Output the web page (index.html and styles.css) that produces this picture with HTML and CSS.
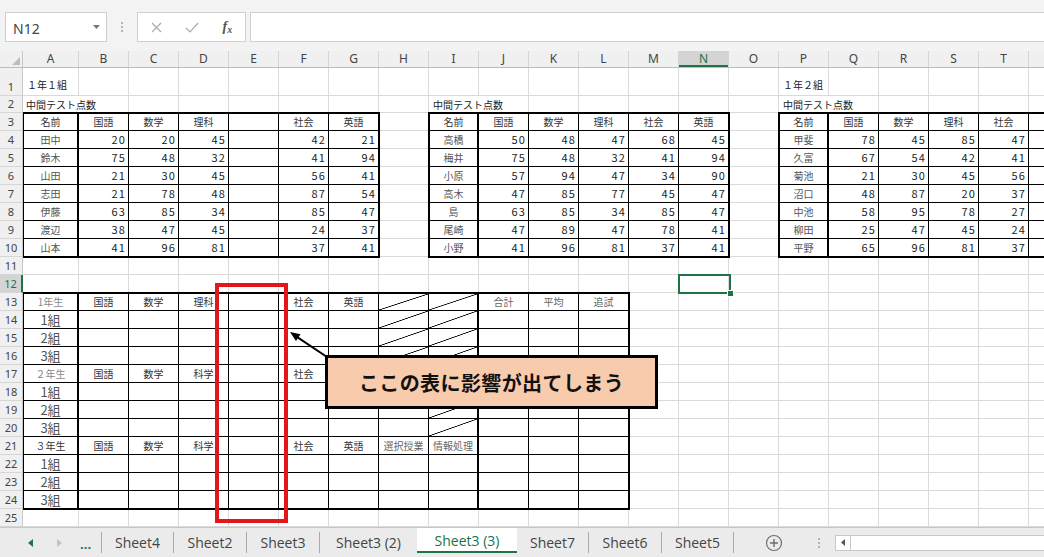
FILE: index.html
```html
<!DOCTYPE html>
<html lang="ja">
<head>
<meta charset="utf-8">
<title>Excel</title>
<link rel="stylesheet" href="styles.css">
</head>
<body>
<div class="app">
  <header class="fbar">
    <div class="namebox">
      <span class="nbtext">N12</span>
      <svg class="dd" width="7" height="4" viewBox="0 0 7 4"><path d="M0 0H7L3.5 4Z" fill="#777"/></svg>
    </div>
    <div class="vdots"><i></i><i></i><i></i></div>
    <div class="fbtns">
      <span class="fslot"><svg width="11" height="11" viewBox="0 0 11 11"><path d="M1 1L10 10M10 1L1 10" stroke="#ababab" stroke-width="1.2" fill="none"/></svg></span>
      <span class="fslot"><svg width="14" height="11" viewBox="0 0 14 11"><path d="M1 6L5 10L13 1" stroke="#ababab" stroke-width="1.2" fill="none"/></svg></span>
      <span class="fslot fx">f<small>x</small></span>
    </div>
    <div class="finput"></div>
  </header>

  <div class="colheads">
    <div class="corner"><svg width="8" height="8" viewBox="0 0 8 8"><path d="M8 0V8H0Z" fill="#bdbdbd"/></svg></div>
    <div class="ch ca">A</div><div class="ch">B</div><div class="ch">C</div><div class="ch">D</div><div class="ch">E</div><div class="ch">F</div><div class="ch">G</div><div class="ch">H</div><div class="ch">I</div><div class="ch">J</div><div class="ch">K</div><div class="ch">L</div><div class="ch">M</div><div class="ch on">N</div><div class="ch">O</div><div class="ch">P</div><div class="ch">Q</div><div class="ch">R</div><div class="ch">S</div><div class="ch">T</div><div class="ch"></div>
  </div>

  <div class="main">
    <div class="rowheads">
      <div class="rh h1">1</div><div class="rh h2">2</div><div class="rh">3</div><div class="rh">4</div><div class="rh">5</div><div class="rh">6</div><div class="rh">7</div><div class="rh">8</div><div class="rh">9</div><div class="rh">10</div><div class="rh">11</div><div class="rh on">12</div><div class="rh">13</div><div class="rh">14</div><div class="rh">15</div><div class="rh">16</div><div class="rh">17</div><div class="rh">18</div><div class="rh">19</div><div class="rh">20</div><div class="rh">21</div><div class="rh">22</div><div class="rh">23</div><div class="rh">24</div><div class="rh">25</div>
    </div>

    <div class="cells">
      <div class="lbl l-a1">１年１組</div>
      <div class="lbl l-a2">中間テスト点数</div>
      <div class="lbl l-i2">中間テスト点数</div>
      <div class="lbl l-p1">１年２組</div>
      <div class="lbl l-p2">中間テスト点数</div>

      <div class="tb t1">
        <span class="a">名前</span><span>国語</span><span>数学</span><span>理科</span><span></span><span>社会</span><span>英語</span>
        <span class="a nm">田中</span><span class="r">20</span><span class="r">20</span><span class="r">45</span><span></span><span class="r">42</span><span class="r">21</span>
        <span class="a nm">鈴木</span><span class="r">75</span><span class="r">48</span><span class="r">32</span><span></span><span class="r">41</span><span class="r">94</span>
        <span class="a nm">山田</span><span class="r">21</span><span class="r">30</span><span class="r">45</span><span></span><span class="r">56</span><span class="r">41</span>
        <span class="a nm">志田</span><span class="r">21</span><span class="r">78</span><span class="r">48</span><span></span><span class="r">87</span><span class="r">54</span>
        <span class="a nm">伊藤</span><span class="r">63</span><span class="r">85</span><span class="r">34</span><span></span><span class="r">85</span><span class="r">47</span>
        <span class="a nm">渡辺</span><span class="r">38</span><span class="r">47</span><span class="r">45</span><span></span><span class="r">24</span><span class="r">37</span>
        <span class="a nm">山本</span><span class="r">41</span><span class="r">96</span><span class="r">81</span><span></span><span class="r">37</span><span class="r">41</span>
      </div>

      <div class="tb t2">
        <span class="a">名前</span><span>国語</span><span>数学</span><span>理科</span><span>社会</span><span>英語</span>
        <span class="a nm">高橋</span><span class="r">50</span><span class="r">48</span><span class="r">47</span><span class="r">68</span><span class="r">45</span>
        <span class="a nm">梅井</span><span class="r">75</span><span class="r">48</span><span class="r">32</span><span class="r">41</span><span class="r">94</span>
        <span class="a nm">小原</span><span class="r">57</span><span class="r">94</span><span class="r">47</span><span class="r">34</span><span class="r">90</span>
        <span class="a nm">高木</span><span class="r">47</span><span class="r">85</span><span class="r">77</span><span class="r">45</span><span class="r">47</span>
        <span class="a nm">島</span><span class="r">63</span><span class="r">85</span><span class="r">34</span><span class="r">85</span><span class="r">47</span>
        <span class="a nm">尾崎</span><span class="r">47</span><span class="r">89</span><span class="r">47</span><span class="r">78</span><span class="r">41</span>
        <span class="a nm">小野</span><span class="r">41</span><span class="r">96</span><span class="r">81</span><span class="r">37</span><span class="r">41</span>
      </div>

      <div class="tb t3">
        <span class="a">名前</span><span>国語</span><span>数学</span><span>理科</span><span>社会</span><span></span>
        <span class="a nm">甲斐</span><span class="r">78</span><span class="r">45</span><span class="r">85</span><span class="r">47</span><span class="r"></span>
        <span class="a nm">久富</span><span class="r">67</span><span class="r">54</span><span class="r">42</span><span class="r">41</span><span class="r"></span>
        <span class="a nm">菊池</span><span class="r">21</span><span class="r">30</span><span class="r">45</span><span class="r">56</span><span class="r"></span>
        <span class="a nm">沼口</span><span class="r">48</span><span class="r">87</span><span class="r">20</span><span class="r">37</span><span class="r"></span>
        <span class="a nm">中池</span><span class="r">58</span><span class="r">95</span><span class="r">78</span><span class="r">27</span><span class="r"></span>
        <span class="a nm">柳田</span><span class="r">25</span><span class="r">47</span><span class="r">45</span><span class="r">24</span><span class="r"></span>
        <span class="a nm">平野</span><span class="r">65</span><span class="r">96</span><span class="r">81</span><span class="r">37</span><span class="r"></span>
      </div>

      <div class="tb t4">
        <span class="a yr">1年生</span><span>国語</span><span>数学</span><span>理科</span><span></span><span>社会</span><span>英語</span><span class="d"></span><span class="a d"></span><span class="lt">合計</span><span class="lt">平均</span><span class="lt">追試</span>
        <span class="a g">1組</span><span></span><span></span><span></span><span></span><span></span><span></span><span class="d"></span><span class="a d"></span><span></span><span></span><span></span>
        <span class="a g">2組</span><span></span><span></span><span></span><span></span><span></span><span></span><span class="d"></span><span class="a d"></span><span></span><span></span><span></span>
        <span class="a g">3組</span><span></span><span></span><span></span><span></span><span></span><span></span><span class="d"></span><span class="a d"></span><span></span><span></span><span></span>
        <span class="a yr">２年生</span><span>国語</span><span>数学</span><span>科学</span><span></span><span>社会</span><span></span><span></span><span class="a d"></span><span></span><span></span><span></span>
        <span class="a g">1組</span><span></span><span></span><span></span><span></span><span></span><span></span><span></span><span class="a d"></span><span></span><span></span><span></span>
        <span class="a g">2組</span><span></span><span></span><span></span><span></span><span></span><span></span><span></span><span class="a d"></span><span></span><span></span><span></span>
        <span class="a g">3組</span><span></span><span></span><span></span><span></span><span></span><span></span><span></span><span class="a d"></span><span></span><span></span><span></span>
        <span class="a yr3">３年生</span><span>国語</span><span>数学</span><span>科学</span><span></span><span>社会</span><span>英語</span><span class="lt">選択授業</span><span class="a lt">情報処理</span><span></span><span></span><span></span>
        <span class="a g">1組</span><span></span><span></span><span></span><span></span><span></span><span></span><span></span><span class="a"></span><span></span><span></span><span></span>
        <span class="a g">2組</span><span></span><span></span><span></span><span></span><span></span><span></span><span></span><span class="a"></span><span></span><span></span><span></span>
        <span class="a g">3組</span><span></span><span></span><span></span><span></span><span></span><span></span><span></span><span class="a"></span><span></span><span></span><span></span>
      </div>

      <div class="sel"></div>

      <div class="hilite"></div>
      <svg class="arrow" width="50" height="35" viewBox="0 0 50 35">
        <path d="M42 30L13 10.6" stroke="#000" stroke-width="2" fill="none"/>
        <path d="M5 5L15.5 7.3L11 13.9Z" fill="#000"/>
      </svg>
      <div class="callout">ここの表に影響が出てしまう</div>
    </div>
  </div>

  <footer class="tabbar">
    <div class="tnav">
      <svg class="tl" width="5" height="8" viewBox="0 0 5 8"><path d="M5 0V8L0 4Z" fill="#217346"/></svg>
      <svg class="tr" width="5" height="8" viewBox="0 0 5 8"><path d="M0 0V8L5 4Z" fill="#c4c4c4"/></svg>
      <span class="tdots">...</span>
    </div>
    <span class="sep"></span>
    <span class="tab w71">Sheet4</span><span class="sep"></span>
    <span class="tab w72">Sheet2</span><span class="sep"></span>
    <span class="tab w72">Sheet3</span><span class="sep"></span>
    <span class="tab w97">Sheet3 (2)</span>
    <span class="tab active">Sheet3 (3)</span>
    <span class="tab w71">Sheet7</span><span class="sep"></span>
    <span class="tab w72">Sheet6</span><span class="sep"></span>
    <span class="tab w71">Sheet5</span><span class="sep"></span>
    <span class="addbtn"><svg width="18" height="18" viewBox="0 0 18 18"><circle cx="9" cy="9" r="7.5" stroke="#6f6f6f" stroke-width="1.2" fill="none"/><path d="M9 5V13M5 9H13" stroke="#6f6f6f" stroke-width="1.4"/></svg></span>
    <span class="hdots"><i></i><i></i><i></i></span>
    <div class="hscroll"><span class="sb"><svg width="4" height="7" viewBox="0 0 4 7"><path d="M4 0V7L0 3.5Z" fill="#555"/></svg></span></div>
  </footer>
</div>
</body>
</html>
```

FILE: styles.css
```css
html, body {
  margin: 0;
  padding: 0;
}
body {
  width: 1044px;
  height: 557px;
  overflow: hidden;
  background: #fff;
  font-family: "Noto Sans", "Noto Sans CJK JP", sans-serif;
}
.app {
  width: 1044px;
  height: 557px;
  display: flex;
  flex-direction: column;
  overflow: hidden;
}

/* formula bar */
.fbar {
  flex: none;
  height: 51px;
  box-sizing: border-box;
  padding: 12px 0 0 5px;
  display: flex;
  align-items: flex-start;
  background: #f3f3f3;
}
.namebox {
  flex: none;
  width: 102px;
  height: 30px;
  box-sizing: border-box;
  border: 1px solid #cfcfcf;
  background: #fff;
  display: flex;
  align-items: center;
  justify-content: space-between;
  padding: 0 6px 0 7px;
}
.nbtext {
  font-size: 14px;
  color: #444;
  padding-top: 3px;
}
.vdots {
  flex: none;
  width: 30px;
  height: 30px;
  display: flex;
  flex-direction: column;
  align-items: center;
  justify-content: center;
  gap: 2px;
}
.vdots i, .hdots i {
  display: block;
  width: 2px;
  height: 2px;
  background: #b4b4b4;
}
.fbtns {
  flex: none;
  width: 109px;
  height: 30px;
  box-sizing: border-box;
  border: 1px solid #cfcfcf;
  background: #fff;
  display: flex;
  align-items: center;
  padding-left: 1px;
}
.fslot {
  width: 36px;
  display: flex;
  justify-content: center;
  align-items: center;
}
.fx {
  font-family: "Liberation Serif", serif;
  font-style: italic;
  font-weight: 700;
  font-size: 14px;
  color: #555;
}
.fx small {
  font-size: 10px;
  position: relative;
  top: 2px;
}
.finput {
  flex: 1;
  height: 30px;
  margin-left: 4px;
  box-sizing: border-box;
  border: 1px solid #cfcfcf;
  border-right: none;
  background: #fff;
}

/* column headers */
.colheads {
  flex: none;
  height: 17px;
  box-sizing: border-box;
  display: flex;
  background: #f0f0f0;
  border-bottom: 1px solid #bcbcbc;
  overflow: hidden;
}
.corner {
  flex: none;
  width: 23px;
  box-sizing: border-box;
  border-right: 1px solid #c8c8c8;
  display: flex;
  align-items: flex-end;
  justify-content: flex-end;
  padding: 0 2px 2px 0;
}
.ch {
  flex: none;
  width: 50px;
  box-sizing: border-box;
  border-right: 1px solid #d6d6d6;
  text-align: center;
  font-size: 12px;
  line-height: 16px;
  color: #444;
}
.ch.ca {
  width: 56px;
}
.ch.on {
  background: #d4d4d4;
  color: #217346;
  box-shadow: inset 0 -2px 0 #217346;
}

/* body */
.main {
  flex: none;
  height: 459px;
  display: flex;
}
.rowheads {
  flex: none;
  width: 23px;
  display: flex;
  flex-direction: column;
  background: #f0f0f0;
}
.rh {
  flex: none;
  height: 18px;
  box-sizing: border-box;
  border-bottom: 1px solid #d6d6d6;
  border-right: 1px solid #c8c8c8;
  font-size: 11px;
  line-height: 17px;
  text-align: center;
  color: #444;
}
.rh.h1 {
  height: 28px;
  padding-top: 10px;
}
.rh.h2 {
  height: 17px;
  line-height: 16px;
}
.rh.on {
  background: #d4d4d4;
  color: #217346;
  border-right: 2px solid #217346;
}

.cells {
  position: relative;
  flex: none;
  width: 1021px;
  height: 459px;
  overflow: hidden;
  display: grid;
  grid-template-columns: 56px repeat(20, 50px);
  grid-template-rows: 28px 17px repeat(23, 18px);
  background-color: #fff;
  background-image:
    repeating-linear-gradient(to right, transparent 0 49px, #dadada 49px 50px),
    repeating-linear-gradient(to bottom, transparent 0 17px, #dadada 17px 18px),
    linear-gradient(#dadada, #dadada),
    linear-gradient(#dadada, #dadada);
  background-position: 6px 0, 0 45px, 0 27px, 0 44px;
  background-size: calc(100% - 6px) 100%, 100% calc(100% - 45px), 100% 1px, 100% 1px;
  background-repeat: no-repeat;
}

.lbl {
  font-family: "Noto Sans CJK JP", sans-serif;
  font-size: 10px;
  color: #222;
  background: #fff;
  margin: 0 1px 1px 0;
  padding-left: 4px;
  display: flex;
  align-items: center;
  white-space: nowrap;
}
.l-a1 { grid-column: 1 / 2; grid-row: 1 / 2; align-items: flex-end; padding-bottom: 3px; }
.l-a2 { grid-column: 1 / 3; grid-row: 2 / 3; padding-left: 3px; }
.l-i2 { grid-column: 9 / 11; grid-row: 2 / 3; }
.l-p1 { grid-column: 16 / 17; grid-row: 1 / 2; align-items: flex-end; padding-bottom: 3px; }
.l-p2 { grid-column: 16 / 18; grid-row: 2 / 3; }

/* bordered tables */
.tb {
  position: relative;
  z-index: 1;
  display: grid;
  margin: -1px;
  border: 2px solid #000;
  background: #000;
  gap: 1px;
  font-family: "Noto Sans CJK JP", sans-serif;
  font-size: 10px;
  color: #333;
}
.tb > span {
  background: #fff;
  display: flex;
  align-items: center;
  justify-content: center;
  white-space: nowrap;
  overflow: hidden;
  line-height: 1;
}
.tb > .a {
  margin-right: 1px;
}
.tb > .r {
  justify-content: flex-end;
  padding-right: 2px;
  font-size: 11px;
  letter-spacing: 1.2px;
  color: #222;
}
.tb > .nm {
  color: #555;
}
.tb > .lt {
  color: #666;
}
.tb > .yr {
  color: #888;
}
.tb > .yr3 {
  color: #333;
}
.tb > .g {
  font-size: 13px;
  color: #555;
}
.tb > .d {
  background: linear-gradient(to bottom right, #fff calc(50% - 0.7px), #111 calc(50% - 0.2px), #111 calc(50% + 0.2px), #fff calc(50% + 0.7px));
}
.t1 {
  grid-column: 1 / 8;
  grid-row: 3 / 11;
  grid-template-columns: 54px repeat(6, 1fr);
  grid-template-rows: 16px repeat(7, 1fr);
}
.t2 {
  grid-column: 9 / 15;
  grid-row: 3 / 11;
  grid-template-columns: 48px repeat(5, 1fr);
  grid-template-rows: 16px repeat(7, 1fr);
}
.t3 {
  grid-column: 16 / 22;
  grid-row: 3 / 11;
  grid-template-columns: 48px repeat(5, 1fr);
  grid-template-rows: 16px repeat(7, 1fr);
}
.t4 {
  grid-column: 1 / 13;
  grid-row: 13 / 25;
  grid-template-columns: 54px repeat(11, 1fr);
  grid-template-rows: 16px repeat(11, 1fr);
}

/* selected cell */
.sel {
  grid-column: 14 / 15;
  grid-row: 12 / 13;
  position: relative;
  z-index: 2;
  margin: -1px -2px -1px -1px;
  border: 2px solid #217346;
}
.sel::after {
  content: "";
  position: absolute;
  right: -5px;
  bottom: -5px;
  width: 5px;
  height: 5px;
  background: #217346;
  border: 1px solid #fff;
}

/* annotations over the sheet */
.hilite {
  position: absolute;
  left: 192px;
  top: 215px;
  width: 73px;
  height: 240px;
  box-sizing: border-box;
  border: 4px solid #e3161c;
  z-index: 3;
}
.arrow {
  position: absolute;
  left: 262px;
  top: 259px;
  z-index: 3;
}
.callout {
  position: absolute;
  left: 302px;
  top: 287px;
  width: 333px;
  height: 54px;
  box-sizing: border-box;
  border: 3px solid #000;
  background: #f8cbad;
  z-index: 3;
  display: flex;
  align-items: center;
  justify-content: center;
  font-family: "Noto Sans CJK JP", sans-serif;
  font-weight: 700;
  font-size: 20px;
  letter-spacing: 0.4px;
  color: #111;
}

/* sheet tabs */
.tabbar {
  flex: none;
  height: 30px;
  box-sizing: border-box;
  border-top: 1px solid #c8c8c8;
  background: #ebebeb;
  display: flex;
  align-items: center;
  font-family: "Open Sans", "Noto Sans", sans-serif;
  font-size: 14px;
  color: #444;
  white-space: nowrap;
}
.tnav {
  flex: none;
  width: 101px;
  height: 100%;
  display: flex;
  align-items: center;
  padding-left: 28px;
  box-sizing: border-box;
}
.tr {
  margin-left: 24px;
}
.tdots {
  margin-left: 18px;
  color: #217346;
  font-weight: 700;
  font-size: 13px;
  padding-top: 2px;
}
.sep {
  flex: none;
  width: 1px;
  height: 21px;
  background: #a9a9a9;
}
.tab {
  flex: none;
  text-align: center;
}
.w71 { width: 71px; }
.w72 { width: 72px; }
.w97 { width: 97px; }
.tab.active {
  width: 100px;
  align-self: flex-start;
  height: 25px;
  box-sizing: border-box;
  background: #fff;
  border-bottom: 2px solid #217346;
  color: #217346;
  line-height: 26px;
}
.addbtn {
  flex: none;
  width: 80px;
  display: flex;
  justify-content: center;
  align-items: center;
}
.hdots {
  flex: none;
  width: 10px;
  display: flex;
  flex-direction: column;
  align-items: center;
  gap: 2px;
}
.hscroll {
  flex: 1;
  margin-left: 11px;
  height: 16px;
  box-sizing: border-box;
  border: 1px solid #c8c8c8;
  border-right: none;
  background: #fff;
  display: flex;
}
.sb {
  width: 15px;
  box-sizing: border-box;
  border-right: 1px solid #c8c8c8;
  display: flex;
  align-items: center;
  justify-content: center;
}
```
